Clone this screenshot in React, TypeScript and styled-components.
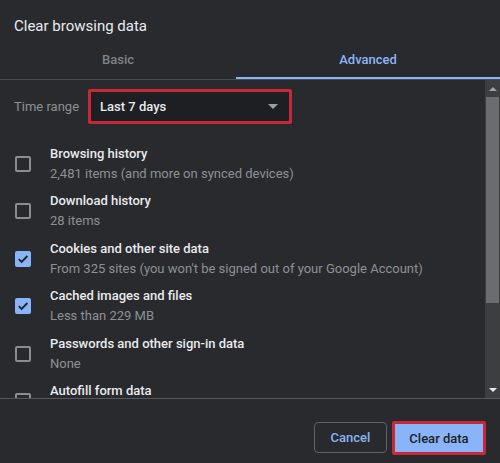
import styled, { createGlobalStyle } from "styled-components";

const GlobalStyle = createGlobalStyle`
  html, body {
    margin: 0;
    padding: 0;
    background: #292a2d;
  }

  body {
    font-family: Roboto, "Liberation Sans", Arial, sans-serif;
    color: #e8eaed;
  }
`;

const Dialog = styled.div`
  width: 500px;
  height: 463px;
  background: #292a2d;
  display: flex;
  flex-direction: column;
  overflow: hidden;
`;

const Title = styled.div`
  font-size: 15px;
  line-height: 20px;
  padding: 16px 14px 0;
  height: 24px;
  color: #e8eaed;
`;

const Tabs = styled.div`
  display: flex;
  height: 39px;
  border-bottom: 1px solid #4a4c50;
`;

const Tab = styled.div<{ $active?: boolean; $width?: number }>`
  flex: ${(p) => (p.$width ? `0 0 ${p.$width}px` : "1")};
  display: flex;
  align-items: center;
  justify-content: center;
  font-size: 13px;
  font-weight: 500;
  color: ${(p) => (p.$active ? "#8ab4f8" : "#7f8388")};
  box-sizing: border-box;
  padding-top: 2px;
  border-bottom: 2px solid ${(p) => (p.$active ? "#8ab4f8" : "transparent")};
`;

const Body = styled.div`
  display: flex;
  height: 318px;
  border-bottom: 1px solid #55585c;
`;

const ScrollArea = styled.div`
  flex: 1;
  overflow: hidden;
  padding: 0 14px;
`;

const TimeRow = styled.div`
  display: flex;
  align-items: center;
  gap: 9px;
  padding-top: 9px;
  height: 35px;
  margin-bottom: 16px;
`;

const TimeLabel = styled.span`
  font-size: 13px;
  color: #8d9196;
`;

const Select = styled.div`
  width: 204px;
  height: 35px;
  box-sizing: border-box;
  border: 3px solid #c8283a;
  border-radius: 2px;
  background: #1e1f22;
  display: flex;
  align-items: center;
  justify-content: space-between;
  padding: 0 11px 0 9px;
  font-size: 13px;
  font-weight: 500;
  color: #e8eaed;
`;

const Caret = styled.span`
  width: 0;
  height: 0;
  border-left: 5px solid transparent;
  border-right: 5px solid transparent;
  border-top: 5px solid #9aa0a6;
`;

const Row = styled.div`
  display: flex;
  align-items: center;
  padding: 3.75px 0;
`;

const Box = styled.span<{ $checked?: boolean }>`
  flex: 0 0 16px;
  height: 16px;
  box-sizing: border-box;
  margin-left: 1px;
  margin-right: 19px;
  border-radius: 2px;
  border: 2px solid ${(p) => (p.$checked ? "#8ab4f8" : "#8a8d91")};
  background: ${(p) => (p.$checked ? "#8ab4f8" : "transparent")};
  display: flex;
  align-items: center;
  justify-content: center;
`;

const Texts = styled.div`
  display: flex;
  flex-direction: column;
`;

const ItemTitle = styled.span`
  font-size: 13px;
  font-weight: 500;
  line-height: 20px;
  color: #e8eaed;
  white-space: nowrap;
`;

const ItemSub = styled.span`
  font-size: 13px;
  line-height: 20px;
  color: #8d9196;
  white-space: nowrap;
`;

const Scrollbar = styled.div`
  flex: 0 0 15px;
  background: #3d3e40;
  display: flex;
  flex-direction: column;
  align-items: center;
`;

const Arrow = styled.span<{ $down?: boolean }>`
  flex: 0 0 17px;
  display: flex;
  align-items: center;
  justify-content: center;

  &::after {
    content: "";
    width: 0;
    height: 0;
    border-left: 4px solid transparent;
    border-right: 4px solid transparent;
    ${(p) =>
      p.$down
        ? "border-top: 4px solid #e8eaed;"
        : "border-bottom: 4px solid #a0a3a7;"}
  }
`;

const Thumb = styled.div`
  width: 13px;
  height: 206px;
  background: #6b6c6e;
`;

const Track = styled.div`
  flex: 1;
`;

const Footer = styled.div`
  flex: 1;
  display: flex;
  justify-content: flex-end;
  align-items: flex-start;
  gap: 5px;
  padding: 23px 14px 0 0;
`;

const Button = styled.button<{ $primary?: boolean }>`
  font-family: Roboto, "Liberation Sans", Arial, sans-serif;
  font-size: 13px;
  font-weight: 500;
  border-radius: 4px;
  box-sizing: border-box;
  cursor: pointer;
  ${(p) =>
    p.$primary
      ? `
    width: 94px;
    height: 34px;
    margin-top: -1px;
    background: #8ab4f8;
    color: #202124;
    border: 3px solid #c8283a;
    border-radius: 2px;
  `
      : `
    width: 73px;
    height: 31px;
    background: transparent;
    color: #8ab4f8;
    border: 1px solid #5f6368;
  `}
`;

const items = [
  { title: "Browsing history", sub: "2,481 items (and more on synced devices)", checked: false },
  { title: "Download history", sub: "28 items", checked: false },
  {
    title: "Cookies and other site data",
    sub: "From 325 sites (you won't be signed out of your Google Account)",
    checked: true,
  },
  { title: "Cached images and files", sub: "Less than 229 MB", checked: true },
  { title: "Passwords and other sign-in data", sub: "None", checked: false },
  { title: "Autofill form data", sub: "", checked: false },
];

const Check = () => (
  <svg width="12" height="12" viewBox="0 0 12 12">
    <path d="M1.8 6.2 L4.6 9 L10.4 3" fill="none" stroke="#202124" strokeWidth="1.8" />
  </svg>
);

export default function App() {
  return (
    <Dialog>
      <GlobalStyle />
      <Title>Clear browsing data</Title>
      <Tabs>
        <Tab $width={236}>Basic</Tab>
        <Tab $active>Advanced</Tab>
      </Tabs>
      <Body>
        <ScrollArea>
          <TimeRow>
            <TimeLabel>Time range</TimeLabel>
            <Select>
              Last 7 days
              <Caret />
            </Select>
          </TimeRow>
          {items.map((item) => (
            <Row key={item.title}>
              <Box $checked={item.checked}>{item.checked && <Check />}</Box>
              <Texts>
                <ItemTitle>{item.title}</ItemTitle>
                <ItemSub>{item.sub || "\u00a0"}</ItemSub>
              </Texts>
            </Row>
          ))}
        </ScrollArea>
        <Scrollbar>
          <Arrow />
          <Thumb />
          <Track />
          <Arrow $down />
        </Scrollbar>
      </Body>
      <Footer>
        <Button>Cancel</Button>
        <Button $primary>Clear data</Button>
      </Footer>
    </Dialog>
  );
}
